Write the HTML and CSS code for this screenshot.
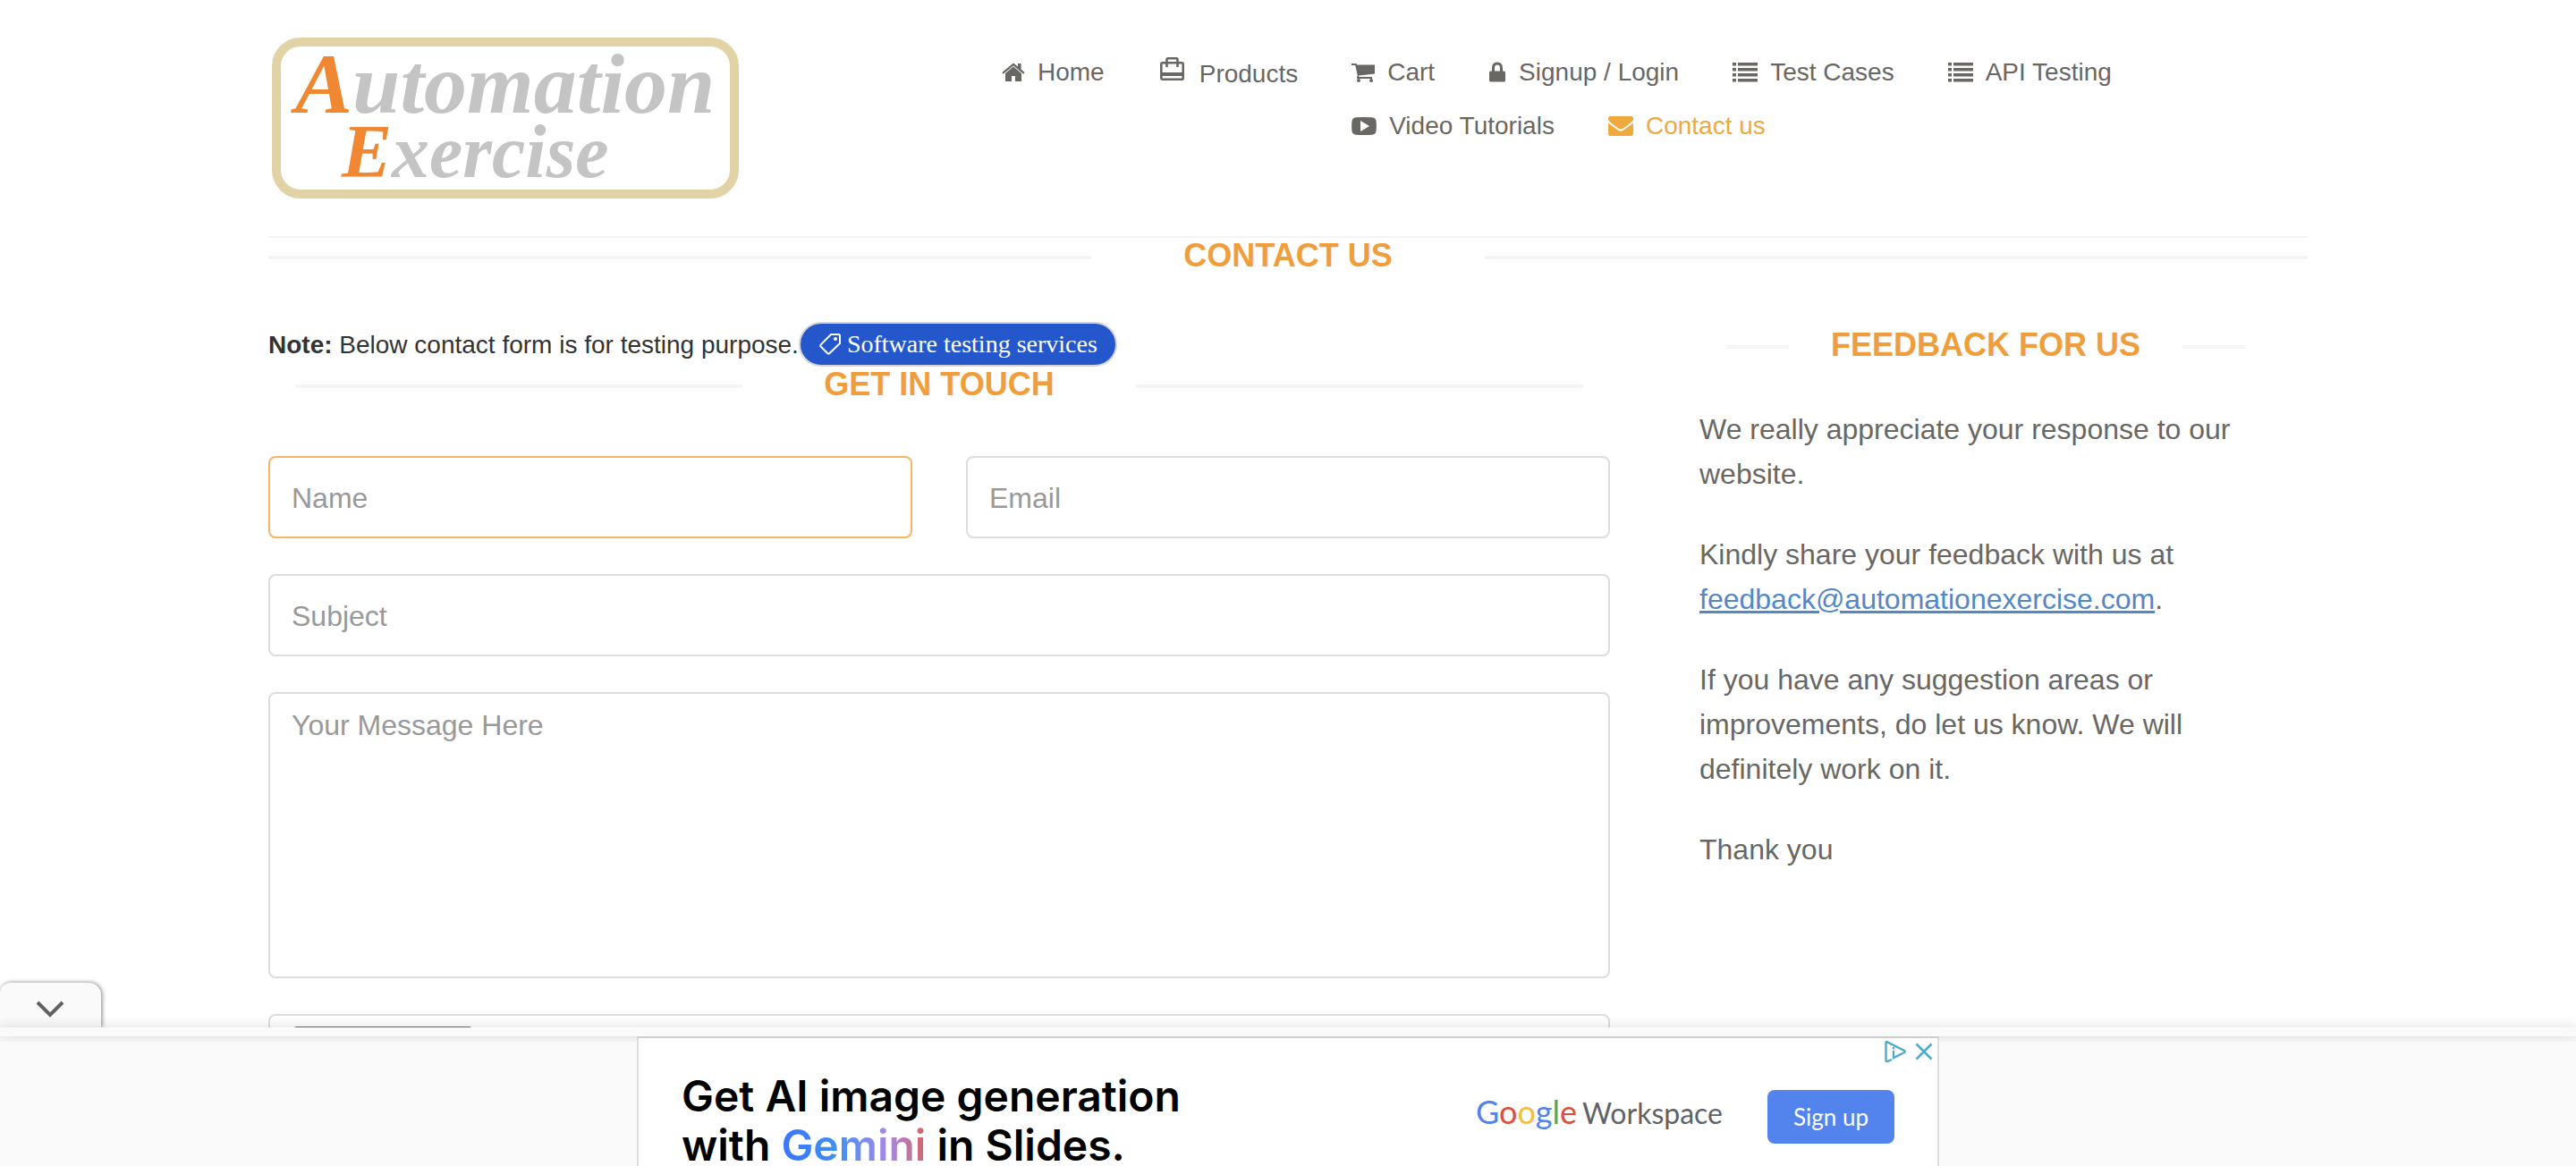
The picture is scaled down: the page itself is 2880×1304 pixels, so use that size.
FILE: index.html
```html
<!DOCTYPE html>
<html lang="en">
<head>
<meta charset="utf-8">
<meta name="viewport" content="width=device-width, initial-scale=1">
<title>Automation Exercise - Contact Us</title>
<link rel="stylesheet" href="styles.css">
</head>
<body>
<header class="container">
  <div class="header-row">
    <a class="logo" href="#" aria-label="Automation Exercise">
      <span class="logo-line logo-first"><span class="logo-initial">A</span>utomation</span>
      <span class="logo-line logo-second"><span class="logo-initial">E</span>xercise</span>
    </a>
    <nav class="menu">
      <ul class="menu-list">
        <li><a href="#"><svg width="26" height="22" viewBox="0 0 26 22"><path d="M13 4.5 4 12v8.400q0 .6.6.6H11v-6h4v6h6.400q.6 0 .6-.6V12z"/><path d="M13 .5.300 11l1.400 1.700L13 3.400l11.300 9.300 1.400-1.700-4.200-3.600V1h-3.500v3.500z"/></svg>Home</a></li>
        <li class="menu-tall"><a href="#"><svg class="icon-bag" width="32" height="28" viewBox="0 0 32 28"><g fill="none" stroke="currentColor" stroke-width="2.600"><rect x="3.300" y="7.300" width="24.400" height="18.400" rx="1.500"/><path d="M9.500 12V3.500q0-1.200 1.200-1.200h9.600q1.200 0 1.200 1.200V12"/></g><path d="M3 18h25v4H3z"/></svg>Products</a></li>
        <li><a href="#"><svg width="26" height="22" viewBox="0 0 26 22"><path d="M0 1h5q1 0 1.200 1.500H26v10L8 14.500q.5 1 .2 1.500H23v2H7q-1.200 0-1-1.500l.8-2L4.200 3H0z"/><circle cx="8" cy="20" r="2"/><circle cx="22" cy="20" r="2"/></svg>Cart</a></li>
        <li><a href="#"><svg width="20" height="24" viewBox="0 0 20 24"><path d="M1 12q0-1.500 1.500-1.500H4V7q0-6.500 6-6.500T16 7v3.500h1.500q1.500 0 1.500 1.500v9q0 1.500-1.500 1.500h-15Q1 22.500 1 21zM7 10.500h6V7q0-3.500-3-3.500T7 7z"/></svg>Signup / Login</a></li>
        <li><a href="#"><svg width="28" height="24" viewBox="0 0 28 24"><path d="M0 1h4v3.500H0zm6 0h22v3.500H6zM0 7h4v3.500H0zm6 0h22v3.500H6zM0 13h4v3.500H0zm6 0h22v3.500H6zM0 19h4v3.500H0zm6 0h22v3.500H6z"/></svg>Test Cases</a></li>
        <li><a href="#"><svg width="28" height="24" viewBox="0 0 28 24"><path d="M0 1h4v3.500H0zm6 0h22v3.500H6zM0 7h4v3.500H0zm6 0h22v3.500H6zM0 13h4v3.500H0zm6 0h22v3.500H6zM0 19h4v3.500H0zm6 0h22v3.500H6z"/></svg>API Testing</a></li>
        <li><a href="#"><svg width="28" height="22" viewBox="0 0 28 22"><path fill-rule="evenodd" d="M5 1.300q9-.7 18 0 4 .4 4.500 4 .7 5.700 0 11.400-.5 3.600-4.500 4-9 .7-18 0-4-.4-4.500-4-.7-5.700 0-11.400.5-3.600 4.500-4zM10 5v12l10-6z"/></svg>Video Tutorials</a></li>
        <li><a class="active" href="#"><svg width="28" height="24" viewBox="0 0 28 24"><path d="M2.500 1h23Q28 1 28 3.500v1.200Q27 7 23 10l-5.500 4q-2.200 1.600-3.500 1.600T10.500 14L5 10Q1 7 0 4.700V3.500Q0 1 2.500 1z"/><path d="M0 8.200q1.200 1.500 3.500 3.100l6 4.300q2.700 2.200 4.500 2.200t4.500-2.200l6-4.300q2.300-1.600 3.500-3.100v12.300q0 2.500-2.500 2.500h-23Q0 23 0 20.500z"/></svg>Contact us</a></li>
      </ul>
    </nav>
  </div>
</header>
<main class="container">
  <h1 class="title page-title">Contact Us</h1>
  <div class="columns">
    <section>
      <div class="note">
        <p class="note-text"><b>Note:</b> Below contact form is for testing purpose.</p>
        <a class="pill" href="#"><svg width="26" height="26" viewBox="0 0 26 26" fill="none" stroke="currentColor" stroke-width="2"><path d="M14 2h8.500Q24 2 24 3.500V12L12.500 23q-1.200 1.200-2.400 0L2.800 15.800q-1.200-1.200 0-2.400z"/><circle cx="19" cy="7" r="1"/></svg>Software testing services</a>
      </div>
      <h2 class="title inset">Get In Touch</h2>
      <form class="form">
        <input class="field focused" type="text" placeholder="Name" aria-label="Name">
        <input class="field" type="email" placeholder="Email" aria-label="Email">
        <input class="field wide" type="text" placeholder="Subject" aria-label="Subject">
        <textarea class="field wide message" placeholder="Your Message Here" aria-label="Your Message Here"></textarea>
        <input class="field wide file" type="file" aria-label="Upload file">
      </form>
    </section>
    <section class="feedback">
      <h2 class="title inset">Feedback For Us</h2>
      <p>We really appreciate your response to our website.</p>
      <p>Kindly share your feedback with us at <a href="mailto:feedback@automationexercise.com">feedback@automationexercise.com</a>.</p>
      <p>If you have any suggestion areas or improvements, do let us know. We will definitely work on it.</p>
      <p>Thank you</p>
    </section>
  </div>
</main>
<aside class="anchor-ad">
  <button class="ad-toggle" type="button" aria-label="Hide ad"><svg width="32" height="22" viewBox="0 0 32 22" fill="none" stroke="#616161" stroke-width="4"><path d="M2 3l14 14L30 3"/></svg></button>
  <div class="ad-edge"></div>
  <div class="ad-area">
    <div class="ad">
      <p class="ad-copy">Get AI image generation<br>with <span class="gemini">Gemini</span> in Slides.</p>
      <div class="ad-brand"><span class="google"><span class="blue">G</span><span class="red">o</span><span class="yellow">o</span><span class="blue">g</span><span class="green">l</span><span class="red">e</span></span><span>Workspace</span></div>
      <a class="ad-button" href="#">Sign up</a>
      <div class="ad-controls">
        <svg width="24" height="24" viewBox="0 0 24 24" fill="none" stroke="currentColor" stroke-width="2.400"><path d="M8 21l-5 2q-1.500.3-1.500-1V2Q1.500.7 3 1.400L22 11q1.200 1 0 2L10 19V11"/><path d="M10 7v2.500"/></svg>
        <svg width="20" height="20" viewBox="0 0 20 20" fill="none" stroke="currentColor" stroke-width="2.600"><path d="M1.500 1.500l17 17M18.500 1.500l-17 17"/></svg>
      </div>
    </div>
  </div>
</aside>
</body>
</html>
```
FILE: styles.css
```css
* { box-sizing: border-box; }

body {
  margin: 0;
  background: #fff;
  color: #696763;
  font-family: "Liberation Sans", Arial, sans-serif;
  font-size: 28px;
  line-height: 40px;
}

h1, h2, p, ul { margin: 0; padding: 0; }

a { color: inherit; text-decoration: none; }

svg { flex: none; }

.container {
  max-width: 2340px;
  margin: 0 auto;
  padding: 0 30px;
}

.header-row {
  display: grid;
  grid-template-columns: 1fr 2fr;
  height: 266px;
  border-bottom: 2px solid #f5f5f5;
}

/* Logo */
.logo {
  width: 522px;
  height: 180px;
  margin: 42px 0 0 4px;
  padding: 4px 8px;
  border: 10px solid #e2d3a6;
  border-radius: 32px;
  color: #c4c4c4;
  font-family: "Liberation Serif", "Times New Roman", serif;
  font-style: italic;
  font-weight: bold;
  white-space: nowrap;
}

.logo-line { display: block; line-height: 76px; }
.logo-first { font-size: 96px; padding-left: 8px; }
.logo-second { font-size: 84px; padding-left: 60px; }
.logo-initial { color: #f08833; }

/* Navigation: the tall Products entry pushes the second row to its right */
.menu { padding: 61px 0 0 30px; }
.menu-list { list-style: none; }
.menu-list li { float: left; height: 60px; padding: 0 30px; }
.menu-list .menu-tall { height: 64px; padding-top: 2px; }
.menu-list a { display: flex; align-items: center; gap: 14px; }
.menu-list svg { fill: currentColor; }
.menu-list .icon-bag { margin-bottom: 12px; }
.menu-list .active { color: #f0a93c; }

/* Headings with a rule on either side */
.title {
  display: flex;
  align-items: center;
  justify-content: space-between;
  color: #f09e3c;
  font-size: 36px;
  font-weight: bold;
  line-height: 40px;
  text-transform: uppercase;
}

.title::before, .title::after {
  content: "";
  flex: 0 0 920px;
  height: 4px;
  margin-top: 4px;
  background: #f5f5f5;
}

.inset { padding: 0 30px; }
.inset::before, .inset::after { flex-basis: 500px; }
.feedback .inset::before, .feedback .inset::after { flex-basis: 70px; }

.columns {
  display: grid;
  grid-template-columns: minmax(0, 1500fr) minmax(0, 640fr);
  gap: 100px;
  padding: 54px 40px 0 0;
}

.note { display: flex; align-items: center; color: #333; }
.note-text { padding-top: 2px; }

.pill {
  display: flex;
  align-items: center;
  gap: 6px;
  height: 50px;
  padding: 2px 20px;
  border: 2px solid #d3d3d3;
  border-radius: 25px;
  background: #2557cc;
  color: #fff;
  font-family: "Liberation Serif", "Times New Roman", serif;
}

/* Form */
.form {
  display: grid;
  grid-template-columns: 1fr 1fr;
  gap: 40px 60px;
  margin-top: 60px;
}

.field {
  width: 100%;
  height: 92px;
  padding: 14px 24px 12px;
  border: 2px solid #ddd;
  border-radius: 8px;
  background: #fff;
  color: #696763;
  font: 32px/44px "Liberation Sans", Arial, sans-serif;
}

.field::placeholder { color: #999; opacity: 1; }
.wide { grid-column: 1 / -1; }
.focused { border-color: #f5b565; }
.message { height: 320px; padding-top: 13px; resize: none; }

.file { padding-top: 12px; }
.file::file-selector-button {
  width: 200px;
  height: 64px;
  margin: 0 8px 0 2px;
  border: 2px solid #6b6b6b;
  border-radius: 4px;
  background: #efefef;
}

/* Feedback text */
.feedback { padding-top: 6px; font-size: 32px; line-height: 50px; }
.feedback .title { margin-bottom: 49px; }
.feedback p { margin-bottom: 40px; }
.feedback p a { color: #5288c7; text-decoration: underline; }

/* Anchored advertisement */
.anchor-ad {
  position: fixed;
  right: 0;
  bottom: 0;
  left: 0;
}

.ad-toggle {
  display: flex;
  align-items: center;
  justify-content: center;
  width: 113px;
  height: 50px;
  padding: 10px 2px 0 0;
  border: 0;
  border-radius: 12px 14px 0 0;
  background: #fafafa;
  box-shadow: 1px 0 5px rgba(0, 0, 0, .5);
}

.ad-edge {
  position: relative;
  height: 10px;
  background: #fafafa;
  box-shadow: 0 0 14px rgba(0, 0, 0, .16);
  clip-path: inset(-20px 0 -6px 0);
}

.ad-area {
  height: 145px;
  overflow: hidden;
  background: #fafafa;
}

.ad {
  position: relative;
  display: flex;
  align-items: center;
  width: 1456px;
  height: 180px;
  margin: 0 auto;
  padding: 0 48px;
  border: 2px solid #ddd;
  border-top-color: #ccc;
  background: #fff;
  color: #5f6368;
  font-family: Lato, sans-serif;
}

.ad-copy {
  flex: 1;
  padding-top: 8px;
  color: #000;
  font-family: Inter, sans-serif;
  font-size: 48px;
  font-weight: 600;
  line-height: 55px;
}

.gemini {
  background: linear-gradient(80deg, #3b78ff 10%, #4290f0 40%, #a888e8 72%, #d8605c 100%);
  -webkit-background-clip: text;
  background-clip: text;
  color: transparent;
}

.ad-brand {
  display: flex;
  align-items: baseline;
  gap: 6px;
  padding-bottom: 10px;
  font-size: 32px;
}

.google { font-size: 36px; }
.blue { color: #5383ec; }
.red { color: #d9503f; }
.yellow { color: #f2bd42; }
.green { color: #58a55c; }

.ad-button {
  width: 142px;
  margin-left: 50px;
  border-radius: 8px;
  background: #5383ec;
  color: #fff;
  font-size: 26px;
  line-height: 60px;
  text-align: center;
}

.ad-controls {
  position: absolute;
  top: 3px;
  right: 5px;
  display: flex;
  align-items: center;
  gap: 10px;
  color: #4fabcb;
}
```
